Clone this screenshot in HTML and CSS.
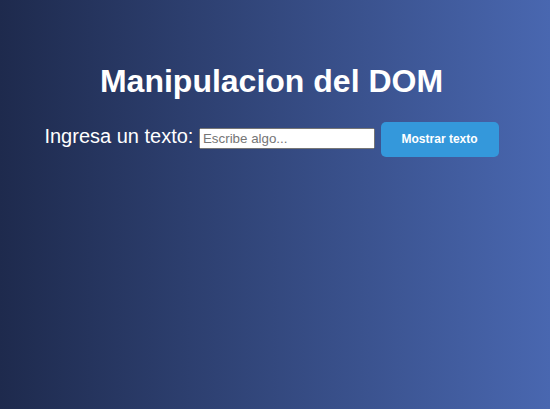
FILE: index.html
```html
<!DOCTYPE html>
<html lang="es">
<head>
<meta charset="utf-8">
<title>Manipulacion del DOM</title>
<link rel="stylesheet" href="styles.css">
</head>
<body>
<main class="page">
  <h1 class="title">Manipulacion del DOM</h1>
  <div class="row">
    <label class="label" for="texto">Ingresa un texto:</label>
    <input class="field" id="texto" type="text" placeholder="Escribe algo...">
    <button class="btn" type="button">Mostrar texto</button>
  </div>
</main>
</body>
</html>
```
FILE: styles.css
```css
html, body {
  margin: 0;
  height: 100%;
}
body {
  background: linear-gradient(to right, #1e2a4d, #4967b0);
  font-family: "Liberation Sans", Arial, sans-serif;
  color: #ffffff;
}
.page {
  padding: 42px 7px 0 0;
  text-align: center;
}
.title {
  font-size: 32px;
  font-weight: bold;
  margin: 21px 0 22px;
}
.row {
  font-size: 20px;
}
.field {
  font-family: "Liberation Sans", Arial, sans-serif;
  font-size: 13.33px;
  width: 176px;
  box-sizing: border-box;
  vertical-align: baseline;
}
.btn {
  font-family: "Liberation Sans", Arial, sans-serif;
  font-size: 12px;
  font-weight: bold;
  line-height: 15px;
  background: #3498db;
  color: #ffffff;
  border: none;
  border-radius: 5px;
  padding: 10px 21px;
}
```
